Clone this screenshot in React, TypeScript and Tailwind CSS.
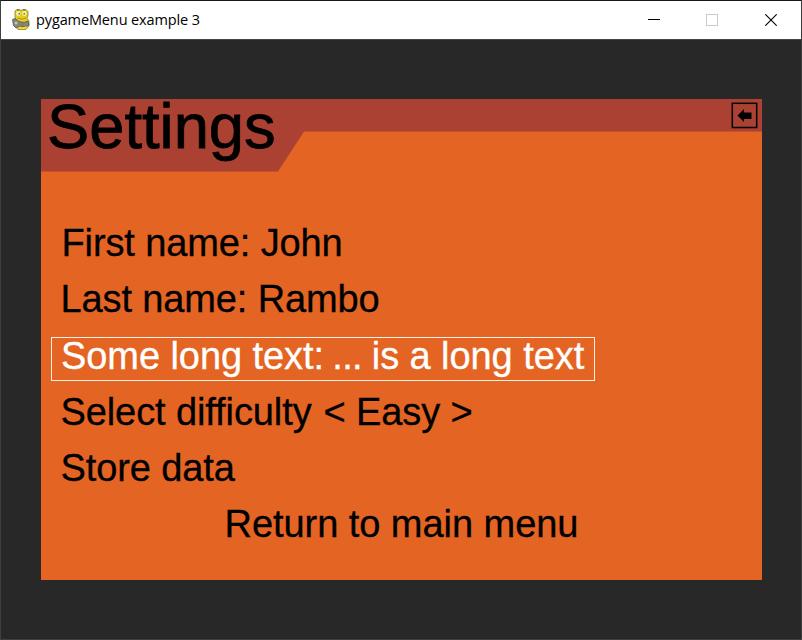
import React from "react";

function Snake() {
  return (
    <svg width="20" height="22" viewBox="0 0 20 22" className="shrink-0">
      <path d="M4 2 L6 0.5 H8 L10 1.500 L12 0.500 H15 L17 2.500 V7 L16 9 L18 12 V17 L15 20.500 H7 L5 18 L5 11 L4 8 Z" fill="#e6ce1e" stroke="#8b8129" strokeWidth="0.8" />
      <path d="M6 1 H8.500 M12 1 H14.500" stroke="#6b6632" />
      <ellipse cx="7.300" cy="4.500" rx="2.200" ry="2.400" fill="#f4efb4" />
      <ellipse cx="13.300" cy="4.500" rx="2.200" ry="2.400" fill="#f4efb4" />
      <path d="M7.500 4 H9 V5.500 H7.500 Z M12.500 4 H14 V5.500 H12.500 Z" fill="#77714d" />
      <path d="M6.500 9 Q10.500 11.500 15 9" stroke="#b2921c" fill="none" />
      <path d="M1.500 10.500 L4 9.500 L8 12.500 L13 13.500 L17 12 L18 16 L14 18 L9 17 L5 19 L2.500 16.500 Z" fill="#84867f" stroke="#555754" strokeWidth="0.800" />
      <path d="M5 12.500 V15.500 M3.500 14 H6.500" stroke="#d5d6cb" />
      <path d="M10.500 14.500 H12.500 V16 H10.500 Z" fill="#b8614b" />
      <path d="M8 19 Q12 20 15.500 18" stroke="#f2df35" strokeWidth="1.500" fill="none" />
    </svg>
  );
}

function TitleBar() {
  return (
    <header className="flex h-[38px] shrink-0 items-center bg-white pl-[10px]">
      <Snake />
      <h1 className="ml-[5px] font-['Open_Sans','Noto_Sans',sans-serif] text-[14.5px] leading-5 tracking-[-0.12px] text-black">
        pygameMenu example 3
      </h1>
      <div className="ml-auto flex h-full">
        <button className="flex w-[58px] items-center justify-center" aria-label="Minimize">
          <svg width="12" height="12" shapeRendering="crispEdges"><path d="M0 5.500 H12" stroke="#000" /></svg>
        </button>
        <button className="flex w-[58px] items-center justify-center" aria-label="Maximize">
          <svg width="12" height="12" shapeRendering="crispEdges"><path d="M.5 .5 H11.500 V11.500 H.5 Z" fill="none" stroke="#ccc" /></svg>
        </button>
        <button className="flex w-[60px] items-center justify-center" aria-label="Close">
          <svg width="12" height="12"><path d="M.3 .3 L11.700 11.700 M11.700 .3 L.3 11.700" stroke="#000" strokeWidth="1.100" /></svg>
        </button>
      </div>
    </header>
  );
}

const rows = [
  { label: "First name: John", style: "pl-[20.5px] tracking-[-0.12px]" },
  { label: "Last name: Rambo", style: "pl-[19.5px] tracking-[-0.12px]" },
  {
    label: (
      <>
        Some long text:
        <span className="ml-[-1.5px] tracking-[-0.7px]"> ... </span>
        is a long text
      </>
    ),
    style: "pl-[9px] tracking-[-0.07px]",
    selected: true,
  },
  {
    label: (
      <>
        Select difficulty <span className="ml-[1.5px]">{"< Easy >"}</span>
      </>
    ),
    style: "pl-[19.5px] tracking-[-0.1px]",
  },
  { label: "Store data", style: "pl-[19.5px] tracking-[-0.1px]" },
  { label: "Return to main menu", style: "pl-[183.5px] tracking-[-0.05px]" },
];

export default function App() {
  return (
    <div className="flex h-[640px] w-[802px] flex-col border border-[#3f3f41] border-t-[#19191b] bg-[#282828]">
      <TitleBar />
      <div className="h-px shrink-0 bg-[#454547]" />
      <main className="ml-[40px] mt-[59px] h-[481px] w-[721px] bg-[#e46423] font-['Liberation_Sans',Arial,sans-serif] text-[38px] text-black [-webkit-text-stroke:0.3px_currentColor]">
        <div className="flex h-[72.5px] justify-between bg-[#aa4133] [clip-path:polygon(0_0,100%_0,100%_32.5px,263px_32.5px,237px_100%,0_100%)]">
          <h2 className="ml-[6px] mt-[-8px] whitespace-nowrap text-[63.3px] leading-[71px] [-webkit-text-stroke:0.8px_currentColor]">Settings</h2>
          <button className="mr-[4px] mt-[3px] flex h-[27px] w-[27px] items-center justify-center" aria-label="Back">
            <svg width="27" height="27">
              <rect x="1.300" y="1.300" width="24.400" height="24.200" fill="none" stroke="#000" strokeWidth="1.500" />
              <path d="M6.500 13.500 L13 7 V10.500 H20.500 V17 H13 V20 Z" fill="#000" />
            </svg>
          </button>
        </div>
        <nav className="flex flex-col pt-[43.5px]">
          {rows.map(({ label, style, selected }, index) => (
            <div key={index} className="flex h-[56.2px] items-center">
              <div className={`whitespace-nowrap ${style} ${selected ? "ml-[10px] mt-[7px] h-[44px] w-[544px] border border-[#fff0e5] leading-[37px] text-white" : "leading-[56px]"}`}>
                {label}
              </div>
            </div>
          ))}
        </nav>
      </main>
    </div>
  );
}
